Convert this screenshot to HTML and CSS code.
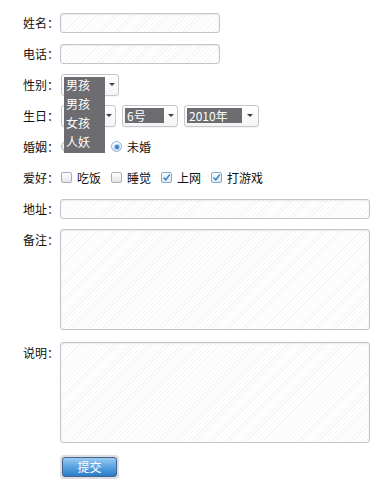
FILE: index.html
```html
<!DOCTYPE html>
<html lang="zh-CN">
<head>
<meta charset="utf-8">
<title>表单</title>
<link rel="stylesheet" href="styles.css">
</head>
<body>
<form class="form">
  <div class="row">
    <label class="label">姓名：</label>
    <span class="text"></span>
  </div>
  <div class="row">
    <label class="label">电话：</label>
    <span class="text"></span>
  </div>
  <div class="row">
    <label class="label">性别：</label>
    <div class="select sel-gender">
      <div class="sel-val">男孩
        <ul class="menu">
          <li>男孩</li>
          <li>女孩</li>
          <li>人妖</li>
        </ul>
      </div>
      <span class="sel-arrow"></span>
    </div>
  </div>
  <div class="row">
    <label class="label">生日：</label>
    <div class="selects">
      <div class="select sel-month"><div class="sel-val"></div><span class="sel-arrow"></span></div>
      <div class="select sel-day"><div class="sel-val">6号</div><span class="sel-arrow"></span></div>
      <div class="select sel-year"><div class="sel-val">2010年</div><span class="sel-arrow"></span></div>
    </div>
  </div>
  <div class="row">
    <label class="label">婚姻：</label>
    <div class="choices">
      <span class="choice"><span class="radio"></span><span class="hidden-label"></span></span>
      <span class="choice"><span class="radio on"></span>未婚</span>
    </div>
  </div>
  <div class="row">
    <label class="label">爱好：</label>
    <div class="choices">
      <span class="choice"><span class="check"></span>吃饭</span>
      <span class="choice"><span class="check"></span>睡觉</span>
      <span class="choice"><span class="check on"><svg viewBox="0 0 9 9" width="9" height="9"><path d="M1.5 4.5 L3.8 6.8 L7.8 1.6" fill="none" stroke="#3a88cc" stroke-width="1.6"/></svg></span>上网</span>
      <span class="choice"><span class="check on"><svg viewBox="0 0 9 9" width="9" height="9"><path d="M1.5 4.5 L3.8 6.8 L7.8 1.6" fill="none" stroke="#3a88cc" stroke-width="1.6"/></svg></span>打游戏</span>
    </div>
  </div>
  <div class="row">
    <label class="label">地址：</label>
    <span class="text wide"></span>
  </div>
  <div class="row top">
    <label class="label">备注：</label>
    <span class="area"></span>
  </div>
  <div class="row top">
    <label class="label">说明：</label>
    <span class="area"></span>
  </div>
  <div class="actions">
    <span class="btn-wrap"><span class="btn">提交</span></span>
  </div>
</form>
</body>
</html>
```

FILE: styles.css
```css
html, body {
  margin: 0;
  padding: 0;
  background: #fff;
}
body {
  font-family: "Noto Sans CJK SC", "Liberation Sans", sans-serif;
  font-size: 12px;
  color: #111;
}
.form {
  padding-top: 12px;
}
.row {
  display: flex;
  align-items: center;
  height: 21px;
  margin-bottom: 10px;
}
.row.top {
  align-items: flex-start;
  height: auto;
  margin-bottom: 12px;
}
.label {
  flex: none;
  width: 59px;
  text-align: right;
  line-height: 21px;
}
.text, .area {
  display: block;
  box-sizing: border-box;
  margin-left: 1px;
  width: 160px;
  height: 20px;
  border: 1px solid #c3c3cb;
  border-radius: 3px;
  background: repeating-linear-gradient(135deg, #fff 0 2px, #f5f5f6 2px 3px);
  box-shadow: inset 0 1px 2px rgba(0, 0, 0, 0.07);
}
.text.wide {
  width: 310px;
}
.area {
  width: 310px;
  height: 101px;
}
.row.top:last-of-type .area {
  height: 100px;
}
/* custom selects */
.selects {
  display: flex;
  gap: 6px;
}
.select {
  position: relative;
  box-sizing: border-box;
  display: flex;
  align-items: center;
  height: 22px;
  margin-left: 2px;
  padding: 0 0 0 2px;
  border: 1px solid #c6c6cc;
  border-radius: 3px;
  background: linear-gradient(#fff, #f4f4f6);
  box-shadow: 0 1px 0 rgba(0, 0, 0, 0.04);
}
.selects .select {
  margin-left: 0;
}
.selects .select:first-child {
  margin-left: 2px;
}
.sel-val {
  position: relative;
  box-sizing: border-box;
  height: 15px;
  line-height: 15px;
  padding-left: 2px;
  background: #6d6d71;
  color: #fff;
  white-space: nowrap;
}
.sel-arrow {
  flex: 1;
  align-self: stretch;
  display: flex;
  align-items: center;
  justify-content: center;
}
.sel-arrow::after {
  content: "";
  width: 0;
  height: 0;
  border-top: 3px solid #3e3e48;
  border-left: 3px solid transparent;
  border-right: 3px solid transparent;
}
.sel-gender { width: 58px; }
.sel-gender .sel-val { width: 41px; }
.sel-month { width: 55px; }
.sel-month .sel-val { width: 38px; }
.sel-day { width: 56px; }
.sel-day .sel-val { width: 39px; }
.sel-year { width: 75px; }
.sel-year .sel-val { width: 55px; }
.menu {
  position: absolute;
  z-index: 5;
  left: 0;
  top: 100%;
  width: 100%;
  margin: 0;
  padding: 2px 0 2px 0;
  list-style: none;
  background: #6d6d71;
  color: #fff;
}
.menu li {
  height: 19px;
  line-height: 19px;
  padding-left: 2px;
}
/* radios & checkboxes */
.choices {
  display: flex;
  margin-left: 2px;
}
.choice {
  display: flex;
  align-items: center;
  margin-right: 10px;
  line-height: 21px;
}
.hidden-label {
  display: inline-block;
  width: 24px;
  height: 12px;
}
.radio, .check {
  flex: none;
  box-sizing: border-box;
  width: 11px;
  height: 11px;
  margin-right: 5px;
  background: linear-gradient(#fdfdfd, #e6e6ea);
  border: 1px solid #adadb6;
}
.check {
  border-radius: 2px;
  display: flex;
  align-items: center;
  justify-content: center;
}
.check.on {
  border-color: #86a9c9;
  background: linear-gradient(#fafcfe, #e2eaf2);
}
.check svg {
  display: block;
}
.radio {
  border-radius: 50%;
  border-color: #a6b6c6;
  display: flex;
  align-items: center;
  justify-content: center;
}
.radio.on {
  border-color: #8fb0cf;
  background: linear-gradient(#fbfdff, #e3ecf5);
}
.radio.on::after {
  content: "";
  width: 4px;
  height: 4px;
  border-radius: 50%;
  background: #2f83d2;
  box-shadow: 0 0 0 1px #a9cbec;
}
/* button */
.actions {
  padding-left: 60px;
}
.btn-wrap {
  display: inline-block;
  padding: 2px;
  border-radius: 4px;
  background: #dedee2;
}
.btn {
  display: block;
  box-sizing: border-box;
  width: 55px;
  height: 20px;
  line-height: 18px;
  text-align: center;
  color: #fff;
  border: 1px solid #44648c;
  border-radius: 3px;
  background: linear-gradient(#9ccaf2, #5aa2e2 50%, #2a7cc8);
}
```
